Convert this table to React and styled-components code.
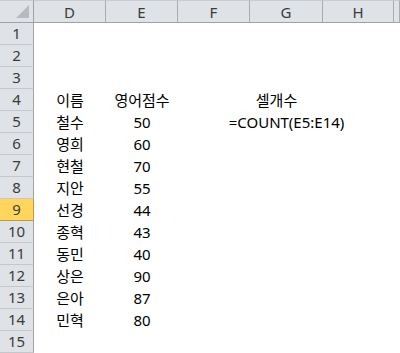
import React from 'react';
import styled, { createGlobalStyle } from 'styled-components';

const GlobalStyle = createGlobalStyle`
  html, body {
    margin: 0;
    padding: 0;
    background: #ffffff;
    overflow: hidden;
  }
`;

const COLS = ['D', 'E', 'F', 'G', 'H', ''];
const ROWS = 15;
const SELECTED_ROW = 9;

// row -> { column: { text, shift } }
const cells = {
  4: { D: { text: '이름' }, E: { text: '영어점수' }, G: { text: '셀개수', shift: -10 } },
  5: { D: { text: '철수' }, E: { text: '50' }, G: { text: '=COUNT(E5:E14)' } },
  6: { D: { text: '영희' }, E: { text: '60' } },
  7: { D: { text: '현철' }, E: { text: '70' } },
  8: { D: { text: '지안' }, E: { text: '55' } },
  9: { D: { text: '선경' }, E: { text: '44' } },
  10: { D: { text: '종혁' }, E: { text: '43' } },
  11: { D: { text: '동민' }, E: { text: '40' } },
  12: { D: { text: '상은' }, E: { text: '90' } },
  13: { D: { text: '은아' }, E: { text: '87' } },
  14: { D: { text: '민혁' }, E: { text: '80' } },
};

const Sheet = styled.div`
  display: grid;
  grid-template-columns: 34px 72px 72px 72px 73px 71px 1fr;
  grid-template-rows: 23px repeat(${ROWS}, 22px);
  width: 400px;
  height: 353px;
  font-family: "Noto Sans", "Noto Sans CJK KR", sans-serif;
  background: #ffffff;
  overflow: hidden;
`;

const Corner = styled.div`
  position: relative;
  background: #dfe2e7;
  border-right: 1px solid #9fa3a8;
  border-bottom: 1px solid #9fa3a8;
  border-top: 1px solid #c9ccd0;
  box-sizing: border-box;

  &::after {
    content: '';
    position: absolute;
    right: 4px;
    bottom: 4px;
    width: 0;
    height: 0;
    border-left: 13px solid transparent;
    border-bottom: 13px solid #b7babf;
  }
`;

const ColHead = styled.div`
  display: flex;
  align-items: center;
  justify-content: center;
  background: #dfe2e7;
  border-right: 1px solid #a9acb0;
  border-bottom: 1px solid #9fa3a8;
  border-top: 1px solid #c9ccd0;
  box-sizing: border-box;
  color: #3b3b3b;
  font-size: 15px;
  line-height: 1;
  padding-top: 1px;
`;

const RowHead = styled.div`
  display: flex;
  align-items: center;
  justify-content: center;
  background: ${(p) => (p.$active ? '#ffd55b' : '#dfe2e7')};
  border-right: 1px solid ${(p) => (p.$active ? '#c2993c' : '#9fa3a8')};
  border-bottom: 1px solid ${(p) => (p.$active ? '#c2993c' : '#c4c7cb')};
  box-sizing: border-box;
  color: #3b3b3b;
  font-size: 15px;
  line-height: 1;
`;

const Cell = styled.div`
  display: flex;
  align-items: center;
  justify-content: center;
  white-space: nowrap;
  font-size: 15px;
  line-height: 1;
  color: #000000;
  padding-top: 1px;
  min-width: 0;
  position: relative;
  z-index: ${(p) => (p.$filled ? 1 : 0)};
`;

const CellText = styled.span`
  transform: translateX(${(p) => p.$shift || 0}px);
`;

export default function App() {
  return (
    <>
      <GlobalStyle />
      <Sheet>
        <Corner />
        {COLS.map((c, i) => (
          <ColHead key={'h' + i}>{c}</ColHead>
        ))}
        {Array.from({ length: ROWS }, (_, r) => {
          const row = r + 1;
          const data = cells[row] || {};
          return (
            <React.Fragment key={row}>
              <RowHead $active={row === SELECTED_ROW}>{row}</RowHead>
              {COLS.map((c, i) => {
                const cell = data[c];
                return (
                  <Cell key={row + '-' + i} $filled={!!cell}>
                    {cell && <CellText $shift={cell.shift}>{cell.text}</CellText>}
                  </Cell>
                );
              })}
            </React.Fragment>
          );
        })}
      </Sheet>
    </>
  );
}
